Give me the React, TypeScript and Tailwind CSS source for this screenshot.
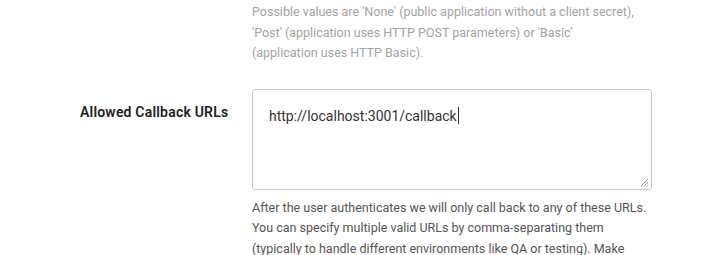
export default function App() {
  return (
    <div className="h-[255px] w-[716px] overflow-hidden bg-white font-['Roboto',sans-serif]">
      <div className="mt-[2px] flex">
        <div className="w-[252px] shrink-0" />
        <p className="w-[385px] text-[12.5px] leading-[20.5px] text-[#a3a3a3]">
          Possible values are 'None' (public application without a client secret), 'Post' (application uses HTTP POST
          parameters) or 'Basic' (application uses HTTP Basic).
        </p>
      </div>

      <div className="mt-[25px] flex">
        <label className="w-[252px] shrink-0 pl-[80px] pt-[13px] text-[14px] font-semibold tracking-[0.2px] text-[#222]">
          Allowed Callback URLs
        </label>
        <div className="w-[400px]">
          <div className="relative h-[101px] rounded-[3px] border border-[#c9cccf] bg-white">
            <div className="px-[16px] pt-[14px] text-[14px] leading-[20px] text-[#333]">
              http://localhost:3001/callback
              <span className="ml-[1px] inline-block h-[17px] w-px translate-y-[3px] bg-[#333]" />
            </div>
            <svg className="absolute bottom-[2px] right-[2px]" width="9" height="9" viewBox="0 0 9 9">
              <path d="M8 1L1 8M8 4L4 8M8 7L7 8" stroke="#999" strokeWidth="1" />
            </svg>
          </div>
          <p className="mt-[8px] text-[12.5px] leading-[20.5px] text-[#555]">
            After the user authenticates we will only call back to any of these URLs. You can specify multiple valid URLs
            by comma-separating them (typically to handle different environments like QA or testing). Make
          </p>
        </div>
      </div>
    </div>
  );
}
